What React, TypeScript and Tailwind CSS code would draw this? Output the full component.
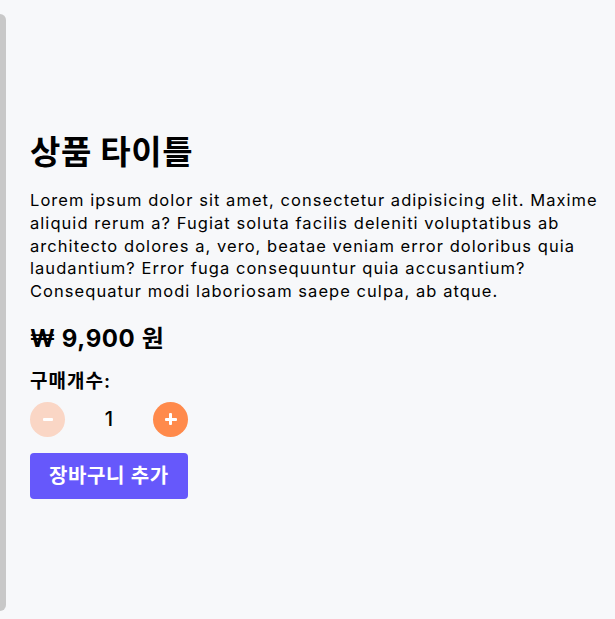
import React, { useState } from "react";

export default function App() {
  const [count, setCount] = useState(1);
  const font = { fontFamily: '"Inter", "Noto Sans CJK KR", sans-serif' };
  return (
    <div className="w-[615px] h-[619px] bg-[#f7f8fa] flex overflow-hidden" style={font}>
      <div className="shrink-0 w-[6px] my-[14px] h-[597px] bg-[#c8c8c8] rounded-r-[8px]" />
      <div className="flex-1 flex flex-col pt-[134px] pl-[24px] h-[619px] text-black">
        <h1 className="text-[33px] leading-[36px] font-bold tracking-[0.6px]">상품 타이틀</h1>
        <p className="mt-[19px] text-[16.5px] leading-[22.75px] tracking-[1.05px] whitespace-nowrap">
          Lorem ipsum dolor sit amet, consectetur adipisicing elit. Maxime
          <br />
          aliquid rerum a? Fugiat soluta facilis deleniti voluptatibus ab
          <br />
          architecto dolores a, vero, beatae veniam error doloribus quia
          <br />
          laudantium? Error fuga consequuntur quia accusantium?
          <br />
          Consequatur modi laboriosam saepe culpa, ab atque.
        </p>
        <div className="mt-[21px] text-[24px] leading-[30px] font-bold tracking-[0.6px]">₩ 9,900 원</div>
        <div className="mt-[16px] text-[19px] leading-[24px] font-semibold tracking-[1px]">구매개수:</div>
        <div className="mt-[8px] flex items-center">
          <button
            aria-label="minus"
            onClick={() => setCount(Math.max(1, count - 1))}
            className="w-[35px] h-[35px] rounded-full bg-[#fad6c5] flex items-center justify-center"
          >
            <span className="block w-[10px] h-[3px] rounded-[1px] bg-white" />
          </button>
          <span className="w-[88px] text-center text-[20px] font-medium">{count}</span>
          <button
            aria-label="plus"
            onClick={() => setCount(count + 1)}
            className="relative w-[35px] h-[35px] rounded-full bg-[#ff8a4b] flex items-center justify-center"
          >
            <span className="absolute w-[12px] h-[3px] rounded-[1px] bg-white" />
            <span className="absolute w-[3px] h-[12px] rounded-[1px] bg-white" />
          </button>
        </div>
        <div className="mt-[16px]">
          <button className="h-[46px] px-[19px] rounded-[4px] bg-[#6658fb] text-white text-[20px] font-semibold tracking-[0.6px]">
            장바구니 추가
          </button>
        </div>
      </div>
    </div>
  );
}
